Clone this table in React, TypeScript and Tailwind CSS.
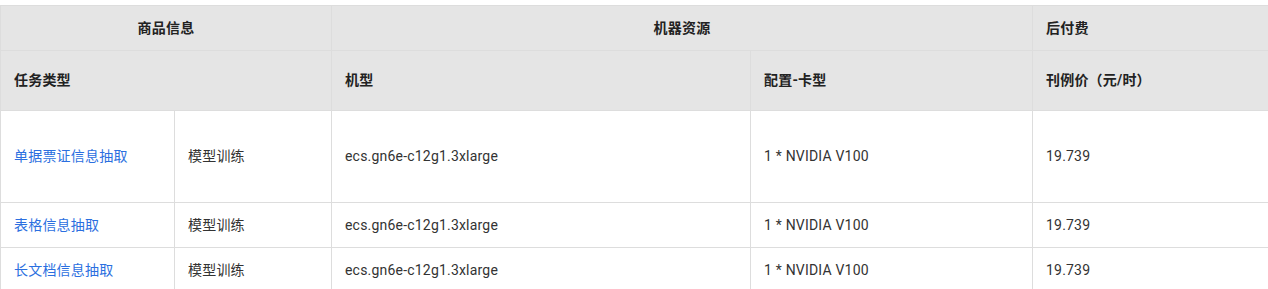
import React from "react";

const rows = [
  { name: "单据票证信息抽取", h: "h-[92px]" },
  { name: "表格信息抽取", h: "h-[45px]" },
  { name: "长文档信息抽取", h: "h-[45px]" },
];

export default function App() {
  const font = { fontFamily: 'Roboto, "Noto Sans CJK SC", sans-serif' };
  const th = "border border-[#dddddd] px-[13px] text-[14px] font-bold tracking-[0.2px] text-[#222222] bg-[#e5e5e5]";
  const td = "border border-[#dddddd] px-[13px] text-[14px] tracking-[0.2px] text-[#333333] bg-white";
  return (
    <div className="w-[1268px] h-[289px] overflow-hidden bg-white pt-[5px]" style={font}>
      <table className="border-collapse w-[1290px] table-fixed">
        <colgroup>
          <col className="w-[174px]" />
          <col className="w-[157px]" />
          <col className="w-[419px]" />
          <col className="w-[282px]" />
          <col />
        </colgroup>
        <thead>
          <tr className="h-[45px]">
            <th colSpan={2} className={`${th} text-center`}>商品信息</th>
            <th colSpan={2} className={`${th} text-center`}>机器资源</th>
            <th className={`${th} text-left`}>后付费</th>
          </tr>
          <tr className="h-[60px]">
            <th colSpan={2} className={`${th} text-left`}>任务类型</th>
            <th className={`${th} text-left`}>机型</th>
            <th className={`${th} text-left`}>配置-卡型</th>
            <th className={`${th} text-left`}>刊例价（元/时）</th>
          </tr>
        </thead>
        <tbody>
          {rows.map((r) => (
            <tr key={r.name} className={r.h}>
              <td className={td}>
                <a className="text-[#2b6fe0]">{r.name}</a>
              </td>
              <td className={td}>模型训练</td>
              <td className={td}>ecs.gn6e-c12g1.3xlarge</td>
              <td className={td}>1 * NVIDIA V100</td>
              <td className={td}>19.739</td>
            </tr>
          ))}
        </tbody>
      </table>
    </div>
  );
}
